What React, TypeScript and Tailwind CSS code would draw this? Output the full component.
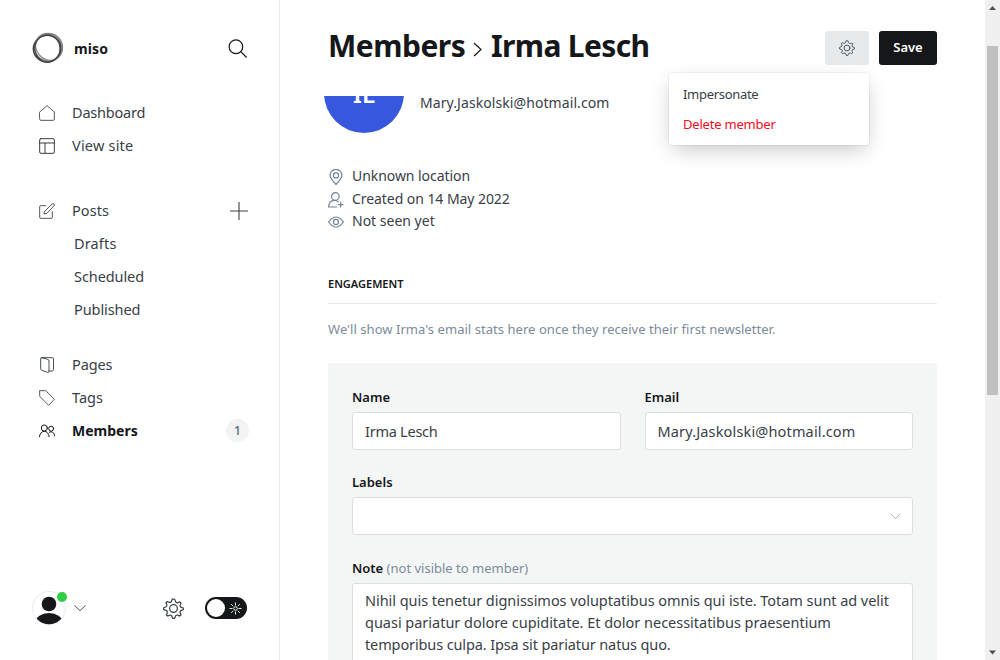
import type { ReactNode } from "react";

type IconProps = { className?: string; size?: number; stroke?: number; children: ReactNode };

function Icon({ className = "", size = 16, stroke = 1.5, children }: IconProps) {
  return (
    <svg
      width={size}
      height={size}
      viewBox="0 0 24 24"
      fill="none"
      stroke="currentColor"
      strokeWidth={stroke}
      strokeLinecap="round"
      strokeLinejoin="round"
      className={"shrink-0 " + className}
    >
      {children}
    </svg>
  );
}

function Gear({ size, stroke, className }: { size: number; stroke: number; className?: string }) {
  return (
    <Icon size={size} stroke={stroke} className={className}>
      <circle cx="12" cy="12" r="4.4" />
      <path d="M13.7 2.1l.6 1.8a2.3 2.3 0 0 0 3.2 1.3l1.7-.8 1.4 1.4-.8 1.7a2.3 2.3 0 0 0 1.3 3.2l2.1.7v1.9l-2.1.8a2.3 2.3 0 0 0-1.3 3.2l.8 1.8-1.6 1.5-1.7-.8a2.3 2.3 0 0 0-3.2 1.3l-.8 2.1h-2.2l-.8-2.1a2.3 2.3 0 0 0-3.2-1.3l-1.7.8-1.5-1.5.8-1.8a2.3 2.3 0 0 0-1.3-3.2L.8 13.3v-2.1l2.1-.9a2.3 2.3 0 0 0 1.3-3.2l-.8-1.7 1.5-1.4 1.7.8a2.3 2.3 0 0 0 3.2-1.3l.8-2.2h2.2z" />
    </Icon>
  );
}

function Logo() {
  return (
    <svg width="32" height="32" viewBox="0 0 32 32" fill="none" className="shrink-0">
      <path d="M13 2.500C21-.500 30 4 30.500 13l-2.500-2C25 5.500 19 3.500 12 4zM28 9c4 6 2.500 13-3 18 2.500-5 4-11 1.500-17z" fill="#b0b0b0" />
      <ellipse cx="16.500" cy="15.300" rx="14" ry="13.700" stroke="#8a8a8a" strokeWidth="1.300" />
      <ellipse cx="15.200" cy="16.600" rx="13.800" ry="13.400" stroke="#444" strokeWidth="1.600" transform="rotate(-20 15.200 16.600)" />
      <ellipse cx="17" cy="14.800" rx="14.200" ry="12.600" stroke="#888" strokeWidth="1.200" transform="rotate(48 17 14.800)" />
      <ellipse cx="15.400" cy="16.500" rx="13.500" ry="12.600" stroke="#444" strokeWidth="1.200" transform="rotate(85 15.400 16.500)" />
    </svg>
  );
}

function NavRow({ icon, label, children, className = "text-[#394047]" }: { icon: ReactNode; label: ReactNode; children?: ReactNode; className?: string }) {
  return (
    <div className={"flex h-[33px] items-center pr-[31px] pl-[39px] " + className}>
      {icon}
      <span className="ml-[17px] flex-1">{label}</span>
      {children}
    </div>
  );
}

function Sidebar() {
  return (
    <aside className="flex h-full w-[280px] shrink-0 flex-col border-r border-[#e9ebed] text-[14.5px] text-[#394047]">
      <div className="flex h-[96px] items-center pr-[33px] pl-8">
        <Logo />
        <span className="ml-[10px] flex-1 text-[14px] font-bold tracking-[0.1px] text-[#15171a]">miso</span>
        <Icon size={19} stroke={1.5} className="mr-[-1px] text-[#15171a]">
          <circle cx="10" cy="9.8" r="8.6" />
          <path d="M16.200 16l7 7" />
        </Icon>
      </div>

      <nav>
        <NavRow
          icon={<Icon stroke={1.3}><path d="M1 10.5L12 .9l11 9.6v10.8a1.7 1.7 0 0 1-1.7 1.7H2.7A1.7 1.7 0 0 1 1 21.3z" /></Icon>}
          label={<span className="tracking-[-0.2px]">Dashboard</span>}
        />
        <NavRow
          icon={<Icon stroke={1.5}><rect x="1" y="1" width="22" height="22" rx="2" /><path d="M1 7.5h22M9 7.5V23" /></Icon>}
          label={<span className="tracking-[0.2px]">View site</span>}
        />
        <div className="mt-8">
          <NavRow
            icon={
              <Icon stroke={1.3}>
                <path d="M20 13v8.2a1.8 1.8 0 0 1-1.8 1.8H2.8A1.8 1.8 0 0 1 1 21.200V5.800A1.8 1.8 0 0 1 2.800 4H10" />
                <path d="M11.500 15.500l-4 1 1-4L19.600 1.500a1.900 1.900 0 0 1 2.900 2.900z" />
              </Icon>
            }
            label={<span className="tracking-[0.1px]">Posts</span>}
          >
            <svg width="18" height="18" viewBox="0 0 18 18" className="shrink-0" stroke="#394047" strokeWidth="1.1">
              <path d="M9 0v18M0 9h18" />
            </svg>
          </NavRow>
        </div>
        <div className="flex flex-col pl-[74px] leading-[33px]">
          <span className="tracking-[0.15px]">Drafts</span>
          <span className="tracking-[-0.08px]">Scheduled</span>
          <span className="tracking-[-0.08px]">Published</span>
        </div>
        <div className="mt-[22px]">
          <NavRow
            icon={
              <Icon stroke={1.4}>
                <path d="M3.800 1h16a2 2 0 0 1 2 2v16a2 2 0 0 1-2 2H15" />
                <path d="M3.800 1l9.400 2.600A2.400 2.400 0 0 1 15 6v15.500a1.600 1.600 0 0 1-2.100 1.500l-8.700-3A2.400 2.400 0 0 1 2.500 17.700V2.200A1.200 1.200 0 0 1 3.800 1z" />
              </Icon>
            }
            label={<span className="tracking-[-0.1px]">Pages</span>}
          />
          <NavRow
            icon={<Icon stroke={1.3}><path d="M1.500 1H9a3 3 0 0 1 2.100.900L23 14l-8.500 9L2 10.500A3 3 0 0 1 1 8.300V1.500z" /></Icon>}
            label={<span>Tags</span>}
          />
          <NavRow
            className="font-bold text-[#15171a]"
            icon={
              <Icon stroke={1.5}>
                <circle cx="8" cy="7.500" r="4.600" />
                <circle cx="18.200" cy="8.500" r="3.700" />
                <path d="M.700 20.500c.500-5 3.500-8 7.300-8s6.800 3 7.300 8M15.500 13.800c4-2.200 7.500 1 8 5.700" />
              </Icon>
            }
            label={<span className="text-[14px]">Members</span>}
          >
            <span className="mr-[-1px] flex h-[23px] w-[23px] items-center justify-center rounded-full bg-[#f1f3f4] text-[13px] font-medium text-[#5d7079]">1</span>
          </NavRow>
        </div>
      </nav>

      <div className="mt-auto mb-[35px] flex h-[34px] items-center pl-8">
        <div className="relative h-[34px] w-[34px]">
          <svg width="34" height="34" viewBox="0 0 34 34">
            <clipPath id="face"><circle cx="17" cy="17" r="16.300" /></clipPath>
            <circle cx="17" cy="17" r="16.500" fill="#fff" stroke="#e8eaec" />
            <g fill="#15171a" clipPath="url(#face)">
              <circle cx="17" cy="13" r="7.300" />
              <ellipse cx="17" cy="31.500" rx="13.500" ry="9.500" />
            </g>
          </svg>
          <span className="absolute top-[1px] right-[-1px] h-[10px] w-[10px] rounded-full bg-[#30cf43]" />
        </div>
        <Icon size={12} stroke={1.900} className="ml-2">
          <path d="M1.500 7L12 17.500 22.500 7" />
        </Icon>
        <Gear size={21} stroke={1.400} className="ml-[77px]" />
        <div className="ml-[21px] flex h-[22px] w-[42px] items-center justify-between rounded-full bg-[#15171a] pr-[5px] pl-[2px]">
          <span className="h-[18px] w-[18px] rounded-full bg-white" />
          <svg width="13" height="13" viewBox="0 0 13 13" fill="none" stroke="#fff" strokeWidth="0.900">
            <circle cx="6.500" cy="6.500" r="1.800" />
            <path d="M6.500 .500v3M6.500 9.500v3M.500 6.500h3M9.500 6.500h3M2.200 2.200l2 2M8.800 8.800l2 2M10.800 2.200l-2 2M4.200 8.800l-2 2" />
          </svg>
        </div>
      </div>
    </aside>
  );
}

function Header() {
  return (
    <header className="relative z-10 flex h-[96px] shrink-0 items-center justify-between bg-white pr-12 pl-12">
      <h1 className="flex items-center pb-1 text-[30px] leading-none font-bold text-[#15171a]">
        <span className="w-[137px] tracking-[-0.5px]">Members</span>
        <svg width="9" height="15" viewBox="0 0 9 15" fill="none" stroke="#15171a" strokeWidth="1.200" className="mt-[6px] mr-[9px] ml-[8px]">
          <path d="M1 1l7 6.500L1 14" />
        </svg>
        <span className="tracking-[-0.650px]">Irma Lesch</span>
      </h1>
      <div className="relative flex gap-[10px]">
        <button className="flex h-[34px] w-[44px] items-center justify-center rounded-[3px] bg-[#e6eaed] text-[#394047]">
          <Gear size={16} stroke={1.300} />
        </button>
        <button className="h-[34px] w-[58px] rounded-[3px] bg-[#15171a] text-[13px] font-semibold text-white">Save</button>
        <div className="absolute top-[42px] right-[68px] flex h-[72px] w-[200px] flex-col rounded-[3px] bg-white py-[6px] pl-[14px] text-[13px] leading-[30px] text-[#394047] shadow-[0_0_0_1px_rgba(0,0,0,0.04),0_7px_20px_-4px_rgba(0,0,0,0.25)]">
          <span className="tracking-[-0.3px]">Impersonate</span>
          <span className="tracking-[-0.2px] text-[#f50b23]">Delete member</span>
        </div>
      </div>
    </header>
  );
}

function Fact({ icon, children }: { icon: ReactNode; children: ReactNode }) {
  return (
    <div className="flex h-[22.400px] items-center text-[14px]">
      <span className="mt-[3px] mr-2 text-[#738393]">{icon}</span>
      {children}
    </div>
  );
}

function Field({ label, children, className = "" }: { label: ReactNode; children: ReactNode; className?: string }) {
  return (
    <div className={className}>
      <div className="h-[25px] text-[13px] leading-[20px] font-semibold text-[#15171a]">{label}</div>
      {children}
    </div>
  );
}

function Member() {
  return (
    <div className="min-h-0 flex-1 overflow-hidden px-12 text-[14.500px] text-[#394047]">
      <div className="mt-[-43px] flex h-[80px]">
        <div className="-ml-1 flex h-20 w-20 items-center justify-center rounded-full bg-[#3558df] text-[24px] leading-none font-semibold text-white">
          <span className="mt-px">IL</span>
        </div>
        <span className="mt-[44px] ml-4 h-3 text-[14px] leading-3 tracking-[0.08px]">Mary.Jaskolski@hotmail.com</span>
      </div>

      <div className="mt-[31.700px] flex flex-col">
        <Fact
          icon={<Icon stroke={1.800}><path d="M12 23.300C7 17.500 3 14 3 9.500a9 9 0 0 1 18 0c0 4.500-4 8-9 13.800z" /><circle cx="12" cy="9.600" r="3.800" /></Icon>}
        >
          <span className="pb-px tracking-[-0.06px]">Unknown location</span>
        </Fact>
        <Fact
          icon={<Icon stroke={1.800}><circle cx="11" cy="6.700" r="5.700" /><path d="M13 22.500H.900c0-6 3.500-10 8.600-10 2.500 0 4.500.700 6 2.200M19 15.500v7M15.500 19h7" /></Icon>}
        >
          <span className="tracking-[-0.06px]">Created on 14 May 2022</span>
        </Fact>
        <Fact
          icon={<Icon stroke={1.800}><path d="M.800 12C5 6.500 8.500 4.500 12 4.500S19 6.500 23.200 12c-4.200 5.500-7.700 7.500-11.200 7.500S5 17.500.800 12z" /><circle cx="12" cy="12" r="3.800" /></Icon>}
        >
          <span>Not seen yet</span>
        </Fact>
      </div>

      <h2 className="mt-[43.100px] h-[29px] border-b border-[#e8eaec] text-[11px] leading-[18px] font-semibold text-[#15171a]">ENGAGEMENT</h2>
      <p className="mt-[15px] h-[20px] text-[13px] leading-[20px] tracking-[0.045px] text-[#7c8b9a]">We'll show Irma's email stats here once they receive their first newsletter.</p>

      <section className="mt-6 h-[500px] rounded-[3px] bg-[#f4f6f6] px-6 pt-6">
        <div className="grid grid-cols-2 gap-6">
          <Field label="Name">
            <div className="flex h-[38px] items-center rounded-[3px] border border-[#dcdfe1] bg-white px-3 pt-px tracking-[-0.250px]">Irma Lesch</div>
          </Field>
          <Field label="Email">
            <div className="flex h-[38px] items-center rounded-[3px] border border-[#dcdfe1] bg-white px-3 pt-px tracking-[0.150px]">Mary.Jaskolski@hotmail.com</div>
          </Field>
        </div>
        <Field label="Labels" className="mt-[22px]">
          <div className="flex h-[38px] items-center justify-end rounded-[3px] border border-[#dcdfe1] bg-white pt-px pr-[11px]">
            <svg width="11" height="7" viewBox="0 0 11 7" fill="none" stroke="#aab5be"><path d="M.700 .700l4.800 5 4.800-5" /></svg>
          </div>
        </Field>
        <Field label={<>Note <span className="font-normal text-[#7c8b9a]">(not visible to member)</span></>} className="mt-[23px]">
          <div className="h-[120px] rounded-[3px] border border-[#dcdfe1] bg-white px-3 pt-[5px] leading-[22px] whitespace-nowrap">
            <p className="tracking-[-0.050px]">Nihil quis tenetur dignissimos voluptatibus omnis qui iste. Totam sunt ad velit</p>
            <p className="tracking-[-0.020px]">quasi pariatur dolore cupiditate. Et dolor necessitatibus praesentium</p>
            <p className="tracking-[-0.120px]">temporibus culpa. Ipsa sit pariatur natus quo.</p>
          </div>
        </Field>
      </section>
    </div>
  );
}

function Scrollbar() {
  return (
    <div className="flex h-full w-[15px] shrink-0 flex-col items-center bg-[#f0f0f0]">
      <svg width="15" height="15" viewBox="0 0 15 15" fill="#505050"><path d="M4 10l3.500-4 3.500 4z" /></svg>
      <div className="mt-[31px] h-[349px] w-[11px] bg-[#c0c0c0]" />
      <svg width="15" height="15" viewBox="0 0 15 15" fill="#505050" className="mt-auto"><path d="M4 5.500h7l-3.500 4z" /></svg>
    </div>
  );
}

export default function App() {
  return (
    <div className="flex h-[660px] w-[1000px] overflow-hidden bg-white font-['Noto_Sans','Open_Sans',sans-serif]">
      <Sidebar />
      <main className="flex h-full min-w-0 flex-1 flex-col">
        <Header />
        <Member />
      </main>
      <Scrollbar />
    </div>
  );
}
